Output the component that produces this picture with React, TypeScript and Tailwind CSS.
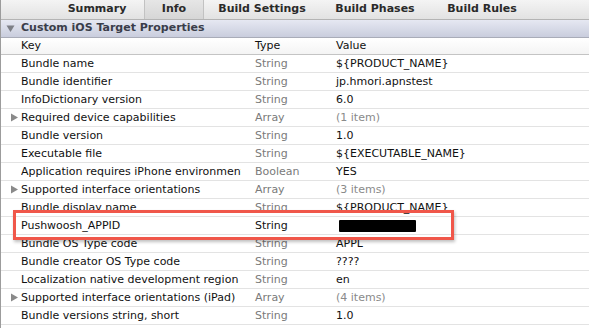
import React from 'react'

interface Row {
  key: string;
  type: string;
  value: string;
  expandable?: boolean;
  dimValue?: boolean;
  active?: boolean;
  redacted?: boolean;
}

const rows: Array<Row> = [
  { key: 'Bundle name', type: 'String', value: '${PRODUCT_NAME}' },
  { key: 'Bundle identifier', type: 'String', value: 'jp.hmori.apnstest' },
  { key: 'InfoDictionary version', type: 'String', value: '6.0' },
  { key: 'Required device capabilities', type: 'Array', value: '(1 item)', expandable: true, dimValue: true },
  { key: 'Bundle version', type: 'String', value: '1.0' },
  { key: 'Executable file', type: 'String', value: '${EXECUTABLE_NAME}' },
  { key: 'Application requires iPhone environment', type: 'Boolean', value: 'YES' },
  { key: 'Supported interface orientations', type: 'Array', value: '(3 items)', expandable: true, dimValue: true },
  { key: 'Bundle display name', type: 'String', value: '${PRODUCT_NAME}' },
  { key: 'Pushwoosh_APPID', type: 'String', value: '', active: true, redacted: true },
  { key: 'Bundle OS Type code', type: 'String', value: 'APPL' },
  { key: 'Bundle creator OS Type code', type: 'String', value: '????' },
  { key: 'Localization native development region', type: 'String', value: 'en' },
  { key: 'Supported interface orientations (iPad)', type: 'Array', value: '(4 items)', expandable: true, dimValue: true },
  { key: 'Bundle versions string, short', type: 'String', value: '1.0' },
]

const tabs = [
  { label: 'Summary', w: 'w-[94px]' },
  { label: 'Info', w: 'w-[60px]', selected: true },
  { label: 'Build Settings', w: 'w-[116px]' },
  { label: 'Build Phases', w: 'w-[110px]' },
  { label: 'Build Rules', w: 'w-[104px]' },
]

const Triangle = ({ down }: { down?: boolean }) => (
  <svg width="9" height="9" viewBox="0 0 9 9" className="shrink-0">
    {down
      ? <path d="M0.5 1.5 H8.5 L4.5 8 Z" fill="#7d7f86" />
      : <path d="M1 0.5 V8.5 L8 4.5 Z" fill="#8a8a8a" />}
  </svg>
)

const PropertyRow = ({ row }: { row: Row }) => (
  <div className="flex h-[18px] items-center border-b border-[#e3e3e3] text-[11px] leading-[14px]">
    <div className="flex w-[254px] shrink-0 items-center pl-[9px]">
      <div className="w-[11px] shrink-0">{row.expandable && <Triangle />}</div>
      <span className="w-[220px] overflow-hidden whitespace-nowrap text-[#111]">{row.key}</span>
    </div>
    <div className={`w-[81px] shrink-0 ${row.active ? 'text-[#111]' : 'text-[#7a7a7a]'}`}>
      {row.type}
    </div>
    <div className={row.dimValue ? 'text-[#8a8a8a]' : 'text-[#111]'}>
      {row.redacted
        ? <div className="ml-[3px] h-[12px] w-[77px] rounded-[1px] bg-black" />
        : row.value}
    </div>
  </div>
)

const App = () => {
  return (
    <div
      className="relative h-[328px] w-[589px] overflow-hidden border-l border-[#9c9c9c] bg-white"
      style={{ fontFamily: '"DejaVu Sans", "Liberation Sans", sans-serif' }}
    >
      {/* tab bar */}
      <div className="flex h-[20px] items-stretch border-b border-[#b4b4b4] bg-gradient-to-b from-[#f4f4f4] to-[#e2e2e2] pl-[49px] text-[11px] font-bold text-[#2a2a2a]">
        {tabs.map((tab) => (
          <div
            key={tab.label}
            className={`flex ${tab.w} items-center justify-center ${
              tab.selected
                ? 'border-x border-[#c2c2c2] bg-gradient-to-b from-[#e6e6e6] to-[#d6d6d6]'
                : ''
            }`}
          >
            {tab.label}
          </div>
        ))}
      </div>

      {/* section header */}
      <div className="flex h-[18px] items-center gap-[6px] border-b border-[#a9acb8] bg-gradient-to-b from-[#e6e8f2] to-[#c9cddd] pl-[5px] text-[11px] font-bold text-[#3a3d4a]">
        <Triangle down />
        <span>Custom iOS Target Properties</span>
      </div>

      {/* column header */}
      <div className="flex h-[17px] items-center border-b border-[#c4c4c4] bg-gradient-to-b from-white to-[#f4f4f4] text-[11px] text-[#111]">
        <div className="w-[254px] shrink-0 pl-[20px]">Key</div>
        <div className="w-[81px] shrink-0">Type</div>
        <div>Value</div>
      </div>

      {rows.map((row) => (
        <PropertyRow key={row.key} row={row} />
      ))}

      {/* highlight annotation */}
      <div className="absolute left-[12px] top-[210px] h-[30px] w-[441px] border-[3px] border-[#f0574a] shadow-[1px_2px_3px_rgba(0,0,0,0.25)]" />
    </div>
  )
}

export default App
